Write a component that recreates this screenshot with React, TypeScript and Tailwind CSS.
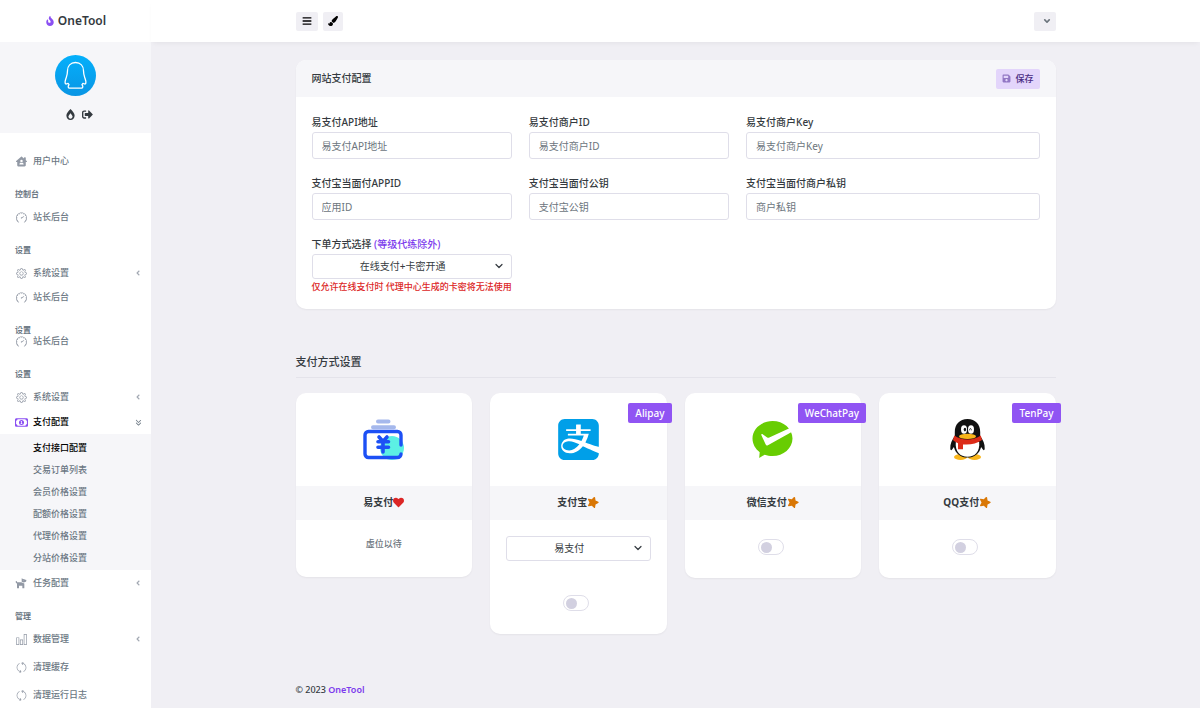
import { useState, type ReactNode } from 'react'
import {
  FaAngleDown,
  FaAngleLeft,
  FaBars,
  FaBurn,
  FaDog,
  FaFire,
  FaHeart,
  FaPaintBrush,
  FaSave,
  FaSignOutAlt,
  FaStar,
} from 'react-icons/fa'
import { FaAnglesDown, FaHouseChimneyUser, FaRegMoneyBill1 } from 'react-icons/fa6'
import { SlChart, SlRefresh, SlSettings, SlSpeedometer } from 'react-icons/sl'
import { SiAlipay } from 'react-icons/si'

const submenu = ['支付接口配置', '交易订单列表', '会员价格设置', '配额价格设置', '代理价格设置', '分站价格设置']

export default function App() {
  return (
    <div className="flex min-h-screen bg-[#f0eff4] font-['Noto_Sans','Noto_Sans_CJK_SC',sans-serif] text-[10px] font-medium text-[#343a40]">
      <Sidebar />
      <div className="min-w-0 flex-1">
        <header className="h-[42px] bg-white shadow-[0_3px_5px_-2px_rgba(0,0,0,0.06)]">
          <div className="mx-auto flex h-full max-w-[760px] items-center gap-[5px]">
            <button aria-label="切换菜单" className="flex h-[19px] w-[22px] items-center justify-center rounded-xs bg-[#f0eff4] text-black">
              <FaBars size={10} />
            </button>
            <button aria-label="切换主题" className="flex h-[19px] w-5 items-center justify-center rounded-xs bg-[#f0eff4] text-black">
              <FaPaintBrush size={10} />
            </button>
            <button aria-label="用户菜单" className="ml-auto flex h-[19px] w-[22px] items-center justify-end rounded-xs bg-[#f0eff4] pr-1 text-[#6c757d]">
              <FaAngleDown size={10} />
            </button>
          </div>
        </header>

        <main className="mx-auto max-w-[760px] pt-[18px]">
          <PayForm />

          <h2 className="mt-[45px] mb-[15px] border-b border-[#e4e3ea] pb-[7px] text-[11px] leading-4">
            支付方式设置
          </h2>
          <div className="grid grid-cols-4 items-start gap-[18px]">
            <PayCard logo={<WalletLogo />} title="易支付" icon={<FaHeart size={11} className="text-[#dc2626]" />}>
              <p className="pt-4 pb-[25px] text-center text-[9px] leading-4 text-[#6c757d]">虚位以待</p>
            </PayCard>
            <PayCard logo={<SiAlipay size={41} className="text-[#009fe8]" />} title="支付宝" badge="Alipay" icon={<Star />}>
              <div className="px-4 pt-4">
                <Select label="支付宝接口" options={['易支付', '支付宝当面付']} />
              </div>
              <div className="pt-[34px] pb-[23px]">
                <Toggle label="支付宝" />
              </div>
            </PayCard>
            <PayCard logo={<WeChatLogo />} title="微信支付" badge="WeChatPay" icon={<Star />}>
              <div className="pt-[19px] pb-[23px]">
                <Toggle label="微信支付" />
              </div>
            </PayCard>
            <PayCard logo={<PenguinLogo />} title="QQ支付" badge="TenPay" icon={<Star />}>
              <div className="pt-[19px] pb-[23px]">
                <Toggle label="QQ支付" />
              </div>
            </PayCard>
          </div>
        </main>

        <footer className="mx-auto max-w-[760px] pt-12 text-[9px] leading-4">
          © 2023{' '}
          <a href="#" className="font-semibold text-[#7c3aed]">
            OneTool
          </a>
        </footer>
      </div>
    </div>
  )
}

function Sidebar() {
  return (
    <aside className="w-[151px] shrink-0 bg-white">
      <a href="#" className="flex h-[42px] items-center justify-center gap-[3px] text-[12px] font-semibold">
        <FaFire size={10} className="text-[#8b50f2]" />
        OneTool
      </a>
      <div className="flex h-[91px] flex-col items-center bg-[#f6f6f9] pt-[13px]">
        <Avatar />
        <div className="flex gap-1.5 pt-[13px] pl-1.5">
          <a href="#" aria-label="主页">
            <FaBurn size={11} />
          </a>
          <a href="#" aria-label="退出">
            <FaSignOutAlt size={11} />
          </a>
        </div>
      </div>

      <nav className="pt-4 text-[9px] text-[#6b7783]">
        <NavItem icon={<FaHouseChimneyUser size={11} />} label="用户中心" />
        <NavHeading>控制台</NavHeading>
        <NavItem icon={<SlSpeedometer size={11} />} label="站长后台" />
        <NavHeading>设置</NavHeading>
        <NavItem icon={<SlSettings size={11} />} label="系统设置" arrow />
        <NavItem icon={<SlSpeedometer size={11} />} label="站长后台" />
        <NavHeading>设置</NavHeading>
        <div className="-mt-3">
          <NavItem icon={<SlSpeedometer size={11} />} label="站长后台" />
        </div>
        <NavHeading>设置</NavHeading>
        <NavItem icon={<SlSettings size={11} />} label="系统设置" arrow />
        <a href="#" className="mt-px flex h-6 items-center gap-1.5 px-[15px] text-black">
          <span className="flex w-3 justify-center text-[#8b50f2]">
            <FaRegMoneyBill1 size={13} className="shrink-0" />
          </span>
          支付配置
          <FaAnglesDown size={7} className="ml-auto -mr-1.5 text-[#6b7783]" />
        </a>
        <ul className="bg-[#f6f6f9] pt-[3px] pb-px">
          {submenu.map((item, i) => (
            <li key={item}>
              <a href="#" className={`flex h-[22px] items-center pl-[33px] ${i === 0 ? 'text-black' : ''}`}>
                {item}
              </a>
            </li>
          ))}
        </ul>
        <div className="pt-px">
          <NavItem icon={<FaDog size={12} />} label="任务配置" arrow />
        </div>
        <NavHeading>管理</NavHeading>
        <div className="flex flex-col gap-1">
          <NavItem icon={<SlChart size={11} />} label="数据管理" arrow />
          <NavItem icon={<SlRefresh size={11} />} label="清理缓存" />
          <NavItem icon={<SlRefresh size={11} />} label="清理运行日志" />
        </div>
      </nav>
    </aside>
  )
}

function NavHeading({ children }: { children: ReactNode }) {
  return <h3 className="h-8 pt-[13px] pl-[15px] text-[8px] leading-4 font-bold">{children}</h3>
}

function NavItem({ icon, label, arrow }: { icon: ReactNode; label: string; arrow?: boolean }) {
  return (
    <a href="#" className="flex h-6 items-center gap-1.5 px-[15px]">
      <span className="flex w-3 justify-center text-[#9299a5]">{icon}</span>
      {label}
      {arrow && <FaAngleLeft size={8} className="ml-auto -mr-1.5 text-[#a3a9b3]" />}
    </a>
  )
}

function PayForm() {
  return (
    <form className="overflow-hidden rounded-[10px] bg-white shadow-xs" onSubmit={(e) => e.preventDefault()}>
      <div className="flex h-[37px] items-center justify-between bg-[#f6f6f9] px-4">
        <h2>网站支付配置</h2>
        <button className="flex h-5 items-center gap-1 rounded-xs bg-[#e3d5fb] px-1.5 text-[9px] text-[#4d2f85]">
          <FaSave size={9} className="text-[#9277c4]" />
          保存
        </button>
      </div>
      <div className="grid grid-cols-[200fr_200fr_293fr] gap-x-[17px] gap-y-[15px] px-4 pt-4 pb-[14px]">
        <Field id="api" label="易支付API地址" placeholder="易支付API地址" />
        <Field id="pid" label="易支付商户ID" placeholder="易支付商户ID" />
        <Field id="key" label="易支付商户Key" placeholder="易支付商户Key" />
        <Field id="appid" label="支付宝当面付APPID" placeholder="应用ID" />
        <Field id="public" label="支付宝当面付公钥" placeholder="支付宝公钥" />
        <Field id="private" label="支付宝当面付商户私钥" placeholder="商户私钥" />
        <div>
          <label htmlFor="mode" className="mb-px block leading-[18px]">
            下单方式选择 <span className="text-[#7c3aed]">(等级代练除外)</span>
          </label>
          <Select id="mode" options={['在线支付+卡密开通', '仅允许在线支付', '仅允许卡密开通']} />
          <p className="text-[9px] leading-4 whitespace-nowrap text-[#dc2626]">
            仅允许在线支付时 代理中心生成的卡密将无法使用
          </p>
        </div>
      </div>
    </form>
  )
}

function Field({ id, label, placeholder }: { id: string; label: string; placeholder: string }) {
  return (
    <div>
      <label htmlFor={id} className="mb-px block leading-[18px]">
        {label}
      </label>
      <input
        id={id}
        placeholder={placeholder}
        className="block h-[27px] w-full rounded-[3px] border border-[#dfdee9] bg-white px-[9px] font-normal placeholder:text-[#6c757d]"
      />
    </div>
  )
}

function Select({ id, label, options }: { id?: string; label?: string; options: string[] }) {
  return (
    <div className="relative">
      <select
        id={id}
        aria-label={label}
        className="block h-[25px] w-full appearance-none rounded-[3px] border border-[#dfdee9] bg-white pr-[27px] pl-[9px] text-center font-normal"
      >
        {options.map((o) => (
          <option key={o}>{o}</option>
        ))}
      </select>
      <svg viewBox="0 0 16 16" className="pointer-events-none absolute top-2 right-[9px] size-2" fill="none" stroke="#343a40" strokeWidth="2.4" strokeLinecap="round" strokeLinejoin="round">
        <path d="M2 5l6 6 6-6" />
      </svg>
    </div>
  )
}

function Toggle({ label }: { label: string }) {
  const [on, setOn] = useState(false)
  return (
    <label className="mx-auto flex w-fit pr-1">
      <input type="checkbox" aria-label={label} checked={on} onChange={(e) => setOn(e.target.checked)} className="peer sr-only" />
      <span className="flex h-4 w-[26px] items-center rounded-full border border-[#dfdee9] px-0.5 peer-checked:justify-end peer-checked:bg-[#8b50f2]">
        <span className="size-[11px] rounded-full bg-[#d2d0e0]" />
      </span>
    </label>
  )
}

interface PayCardProps {
  logo: ReactNode
  title: string
  icon: ReactNode
  badge?: string
  children: ReactNode
}

function PayCard({ logo, title, icon, badge, children }: PayCardProps) {
  return (
    <section className="relative rounded-[10px] bg-white shadow-xs">
      {badge && (
        <span className="absolute top-[10px] -right-[5px] rounded-xs bg-[#9054f3] px-[7px] leading-5 text-white">
          {badge}
        </span>
      )}
      <div className="flex h-[93px] items-center justify-center">{logo}</div>
      <h3 className="flex h-[34px] items-center justify-center bg-[#f6f6f9] pb-0.5 font-bold">
        {title}
        {icon}
      </h3>
      {children}
    </section>
  )
}

function Star() {
  return <FaStar size={12} className="rotate-[18deg] text-[#d97706]" />
}

function Avatar() {
  return (
    <svg width="41" height="41" viewBox="0 0 41 41">
      <defs>
        <linearGradient id="sky" x1="0" y1="0" x2="0" y2="1">
          <stop offset="0" stopColor="#04b0fb" />
          <stop offset="1" stopColor="#0a95e4" />
        </linearGradient>
      </defs>
      <circle cx="20.5" cy="20.5" r="20.5" fill="url(#sky)" />
      <path
        d="M20.5 7.500c-5 0-8 3.500-8 8.300 0 4-.8 5.500-1.600 7.700-.9 2.500-1.100 4.300-.4 5.300.6.500 1.300.200 2.600-.5l1 1.500c-1 .8-1.500 3 .3 3.400h12.200c1.800-.4 1.300-2.600.3-3.400l1-1.500c1.300.7 2 1 2.600.5.7-1 .5-2.800-.4-5.300-.8-2.200-1.600-3.700-1.600-7.700 0-4.800-3-8.300-8-8.300z"
        fill="none"
        stroke="#fff"
        strokeWidth="1.300"
        strokeLinejoin="round"
      />
    </svg>
  )
}

function WalletLogo() {
  return (
    <svg width="41" height="41" viewBox="0 0 41 41" fill="none" strokeLinecap="round" strokeLinejoin="round">
      <circle cx="29" cy="29" r="12" fill="#5cf0e4" />
      <path d="M15 2.500h10.500M10 8.300h21" stroke="#a5b8ec" strokeWidth="4" />
      <path d="M38 26V16a3.500 3.500 0 0 0-3.500-3.500h-29A3.500 3.500 0 0 0 2 16v19a3.500 3.500 0 0 0 3.500 3.500h29A3.500 3.500 0 0 0 38 35" stroke="#1d50f5" strokeWidth="3.400" />
      <path d="M16 18l4 4.500 4-4.500M15 22.800h10.500M15 28.300h10.500M20 23v10" stroke="#1d50f5" strokeWidth="3.600" />
    </svg>
  )
}

function WeChatLogo() {
  return (
    <svg width="41" height="41" viewBox="0 0 41 41">
      <path d="M20.500 2C9.500 2 .5 9.700.5 19.500c0 5.500 2.800 10.300 7.200 13.700L7.200 39l5.500-3.300c2.400.8 5 1.300 7.800 1.300 11 0 20-7.700 20-17.500S31.500 2 20.500 2z" fill="#68cd02" />
      <path d="M9.300 16l4.400 9.600c.4 1 1.200 1.200 2.200.7L41 12.300 38.500 8.700 17.300 18.600c-.8.400-1.500.3-2.100-.1l-4.200-3c-1-.7-2-.5-1.700.5z" fill="#fff" />
    </svg>
  )
}

function PenguinLogo() {
  return (
    <svg width="41" height="41" viewBox="0 0 41 41">
      <ellipse cx="13.500" cy="38" rx="6.500" ry="3" fill="#f9b51a" />
      <ellipse cx="27.500" cy="38" rx="6.500" ry="3" fill="#f9b51a" />
      <path d="M20.500 0C12.500 0 7.800 5.500 7.800 13v4C5 21 3 25 3.300 29.500c.1 2 .9 2.200 2 .8l1.600-2.400c1.500 6.500 7 10.700 13.600 10.700s12.100-4.200 13.600-10.700l1.600 2.400c1.100 1.400 1.900 1.200 2-.8.300-4.500-1.700-8.500-4.500-12.500v-4C33.200 5.500 28.500 0 20.500 0z" fill="#111" />
      <path d="M8.800 23c-.8 9.700 4.200 14.800 11.700 14.800S33 32.700 32.200 23z" fill="#fff" />
      <path d="M7.200 16.500C15 21.700 26 21.700 33.800 16.500l1.200 4.600c-5.500 4-12 4.800-19 4.300v4.900h-5v-6.100c-1.900-.7-3.700-1.800-5-3.100z" fill="#dc2b18" />
      <ellipse cx="17" cy="10.500" rx="3" ry="4.200" fill="#fff" />
      <ellipse cx="24" cy="10.500" rx="3" ry="4.200" fill="#fff" />
      <ellipse cx="17.900" cy="10.600" rx="1.200" ry="1.800" fill="#111" />
      <path d="M22.500 11.300c0-2.400 1.800-2.400 1.800 0" fill="none" stroke="#111" strokeWidth=".8" />
      <ellipse cx="20.500" cy="17.400" rx="8.500" ry="2.600" fill="#f9b51a" />
    </svg>
  )
}
